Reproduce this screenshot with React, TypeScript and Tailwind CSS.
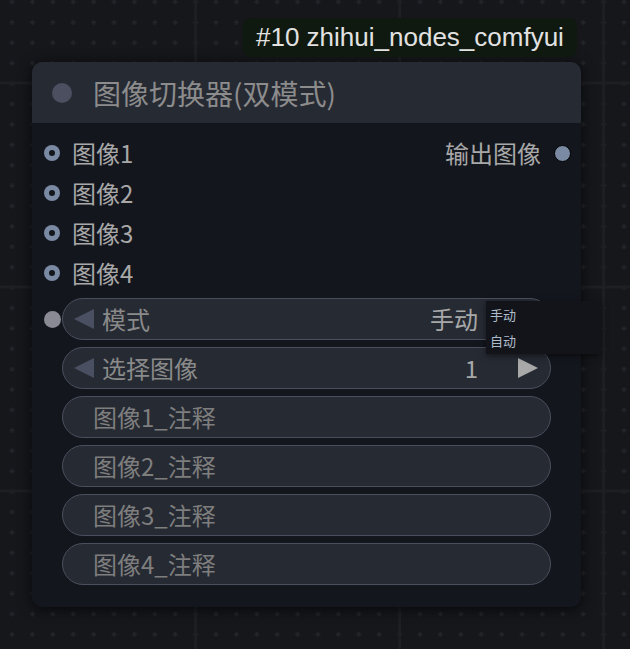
import React from 'react';

const cjk = { fontFamily: '"Noto Sans CJK SC", "Noto Sans", sans-serif' };

function GridCanvas() {
    const vx = [195.6, 399.6, 603.6];
    const hy = [83, 287, 491];
    return (
        <svg className="absolute inset-0" width="630" height="649">
            <defs>
                <pattern id="minor" patternUnits="userSpaceOnUse" x="1.8" y="-8.2" width="20.4" height="20.4">
                    <path d="M10.2 7.7v5M7.7 10.2h5" stroke="#25262b" strokeWidth="1.5" />
                </pattern>
            </defs>
            <rect width="630" height="649" fill="#16171b" />
            <rect width="630" height="649" fill="url(#minor)" />
            {vx.map((x) => (
                <line key={'v' + x} x1={x} y1="0" x2={x} y2="649" stroke="#1e1f23" strokeWidth="3" />
            ))}
            {hy.map((y) => (
                <line key={'h' + y} x1="0" y1={y} x2="630" y2={y} stroke="#1e1f23" strokeWidth="3" />
            ))}
        </svg>
    );
}

function InputRow({ label }: { label: string }) {
    return (
        <div className="flex items-center h-[40px] pl-[12px]">
            <span className="w-[16px] h-[16px] rounded-full bg-[#7a8aa3] flex items-center justify-center">
                <span className="w-[6px] h-[6px] rounded-full bg-[#13161d]" />
            </span>
            <span className="ml-[12px] text-[24px] leading-none text-[#a8a8a8]">{label}</span>
        </div>
    );
}

function Arrow({ dir, color }: { dir: 'left' | 'right'; color: string }) {
    return (
        <svg width="20" height="20" viewBox="0 0 20 20">
            {dir === 'left' ? <path d="M0 10L20 0V20Z" fill={color} /> : <path d="M20 10L0 0V20Z" fill={color} />}
        </svg>
    );
}

function ComboWidget({ label, value, showDot }: { label: string; value: string; showDot?: boolean }) {
    return (
        <div className="relative h-[42px] rounded-full border-[1.5px] border-[#4a4f5d] bg-[#262a33] flex items-center">
            {showDot && <span className="absolute left-[-19px] top-[12px] w-[17px] h-[17px] rounded-full bg-[#8a8a94]" />}
            <span className="ml-[11px]">
                <Arrow dir="left" color="#4a5061" />
            </span>
            <span className="ml-[8px] text-[24px] leading-none text-[#8a8a8a]">{label}</span>
            <span className="ml-auto text-[24px] leading-none text-[#a8a8a8]">{value}</span>
            <span className="ml-[40px] mr-[12px]">
                <Arrow dir="right" color="#a9a9a9" />
            </span>
        </div>
    );
}

function TextWidget({ label }: { label: string }) {
    return (
        <div className="h-[42px] rounded-full border-[1.5px] border-[#4a4f5d] bg-[#262a33] flex items-center pl-[30px]">
            <span className="text-[24px] leading-none text-[#7e7e7e]">{label}</span>
        </div>
    );
}

export default function App() {
    return (
        <div className="relative w-[630px] h-[649px] overflow-hidden bg-[#16171b]" style={cjk}>
            <GridCanvas />

            <div className="absolute left-[32px] top-[62px] w-[549px] h-[545px] rounded-[10px] bg-[#13161d] shadow-[0_2px_14px_rgba(0,0,0,0.7)]">
                {/* badge */}
                <div
                    className="absolute left-[211px] top-[-44px] h-[39px] px-[13px] rounded-[8px] bg-[#0f190f] flex items-center text-[26px] text-[#e2e2e2] whitespace-nowrap"
                    style={{ fontFamily: '"Liberation Sans", Arial, sans-serif' }}
                >
                    #10 zhihui_nodes_comfyui
                </div>

                {/* title bar */}
                <div className="h-[61px] rounded-t-[10px] bg-[#262a33] flex items-center pl-[20px]">
                    <span className="w-[20px] h-[20px] rounded-full bg-[#4b4f60]" />
                    <span className="ml-[21px] text-[28px] leading-none text-[#8c8c8c]">图像切换器(双模式)</span>
                </div>

                <div className="relative pt-[10px]">
                    <div className="absolute right-[10px] top-[10px] h-[40px] flex items-center">
                        <span className="text-[24px] leading-none text-[#a8a8a8]">输出图像</span>
                        <span className="ml-[13px] w-[17px] h-[17px] rounded-full bg-[#7a8aa3] border-[1.5px] border-black" />
                    </div>
                    <InputRow label="图像1" />
                    <InputRow label="图像2" />
                    <InputRow label="图像3" />
                    <InputRow label="图像4" />
                </div>

                <div className="mt-[5px] px-[30px] flex flex-col gap-[7px]">
                    <ComboWidget label="模式" value="手动" showDot />
                    <ComboWidget label="选择图像" value="1" />
                    <TextWidget label="图像1_注释" />
                    <TextWidget label="图像2_注释" />
                    <TextWidget label="图像3_注释" />
                    <TextWidget label="图像4_注释" />
                </div>

                {/* dropdown menu */}
                <div className="absolute left-[454px] top-[239px] w-[115px] h-[53px] bg-[#12141a] shadow-[0_2px_6px_rgba(0,0,0,0.5)] pl-[4px] flex flex-col text-[13px] leading-none text-[#aebccb]">
                    <span className="h-[26px] flex items-center">手动</span>
                    <span className="h-[26px] flex items-center">自动</span>
                </div>
            </div>
        </div>
    );
}
